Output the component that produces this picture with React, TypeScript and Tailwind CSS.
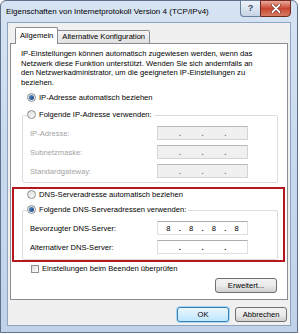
import React from 'react'

const font = { fontFamily: '"Liberation Sans", Arial, sans-serif' }

function Radio({ checked, disabled }: { checked?: boolean; disabled?: boolean }) {
  return (
    <span
      className={`w-[9px] h-[9px] rounded-full border flex items-center justify-center shrink-0 bg-gradient-to-br from-[#d9d9d9] to-[#ffffff] ${
        disabled ? 'border-[#b0b0b0]' : 'border-[#8e8f8f]'
      }`}
    >
      {checked && (
        <span className="w-[5px] h-[5px] rounded-full bg-gradient-to-br from-[#5b8fd4] to-[#153e7a]" />
      )}
    </span>
  )
}

function IpField({ values, disabled }: { values?: string[]; disabled?: boolean }) {
  const v = values ?? ['', '', '', '']
  return (
    <div
      className={`w-[91px] h-[14px] border flex items-center text-[7.6px] ${
        disabled
          ? 'bg-[#f0f0f0] border-[#d4d4d4] border-t-[#b8b8b8] text-[#6d6d6d]'
          : 'bg-white border-[#dbdfe6] border-t-[#abadb3] text-black'
      }`}
    >
      {v.map((x, i) => (
        <React.Fragment key={i}>
          <span className="flex-1 text-center">{x}</span>
          {i < 3 && <span className="font-bold">.</span>}
        </React.Fragment>
      ))}
    </div>
  )
}

function FieldRow({ label, disabled, values }: { label: string; disabled?: boolean; values?: string[] }) {
  return (
    <div className="h-[19px] flex items-center">
      <span className={`ml-[7px] w-[127px] ${disabled ? 'text-[#a3a3a3]' : 'text-black'}`}>{label}</span>
      <IpField disabled={disabled} values={values} />
    </div>
  )
}

function Button({ children, primary, className }: { children: React.ReactNode; primary?: boolean; className?: string }) {
  return (
    <div
      className={`h-[15px] rounded-[3px] border flex items-center justify-center bg-gradient-to-b ${
        primary
          ? 'border-[#3c7fb1] from-[#eaf6fd] to-[#bee6fd] shadow-[0_0_0_1px_#a6d6f5]'
          : 'border-[#707070] from-[#f2f2f2] via-[#ebebeb] to-[#cfcfcf]'
      } ${className ?? ''}`}
    >
      {children}
    </div>
  )
}

export default function App() {
  return (
    <div className="w-[300px] h-[334px] bg-white text-[7.6px] text-black leading-none" style={font}>
      <div className="w-[298px] h-[333px] rounded-t-[6px] border border-[#5f7289] bg-gradient-to-b from-[#d6e3f3] via-[#c8d9ee] to-[#bfd2ea] flex flex-col px-[6px] pb-[6px]">
        {/* Title bar */}
        <div className="h-[21px] flex justify-between shrink-0">
          <span className="mt-[7px] -ml-[1px] text-[8px] text-black">
            Eigenschaften von Internetprotokoll Version 4 (TCP/IPv4)
          </span>
          <div className="flex h-[17px] -mt-[1px]">
            <div className="w-[20px] h-full border border-[#6b7e97] border-r-0 rounded-bl-[4px] bg-gradient-to-b from-[#eef3fa] via-[#dbe5f1] to-[#c5d3e4] flex items-center justify-center text-[9px] font-bold text-[#3b4a5e]">
              ?
            </div>
            <div className="w-[31px] h-full border border-[#6e2b22] rounded-br-[4px] bg-gradient-to-b from-[#e9a99b] via-[#c9452f] to-[#d67a64] flex items-center justify-center">
              <svg width="10" height="9" viewBox="0 0 10 9">
                <path d="M1.5 1 L8.5 8 M8.5 1 L1.5 8" stroke="#5a1a12" strokeWidth="3" strokeLinecap="round" />
                <path d="M1.5 1 L8.5 8 M8.5 1 L1.5 8" stroke="#ffffff" strokeWidth="1.8" strokeLinecap="round" />
              </svg>
            </div>
          </div>
        </div>

        {/* Dialog body */}
        <div className="flex-1 bg-[#f0f0f0] border border-[#8ea4c1] flex flex-col px-[2px] pt-[5px]">
          {/* Tabs */}
          <div className="flex items-end ml-[5px] h-[16px] relative z-10 -mb-[1px]">
            <div className="h-[17px] px-[4px] bg-white border border-[#898c95] border-b-0 flex items-center rounded-t-[2px]">
              Allgemein
            </div>
            <div className="h-[14px] px-[4px] bg-gradient-to-b from-[#f4f4f4] to-[#e1e1e1] border border-[#898c95] border-l-0 flex items-center rounded-tr-[2px]">
              Alternative Konfiguration
            </div>
          </div>

          {/* Tab panel */}
          <div className="h-[257px] bg-white border border-[#898c95] flex flex-col">
            <p className="ml-[10px] mt-[5px] w-[242px] leading-[9.7px]">
              IP-Einstellungen können automatisch zugewiesen werden, wenn das Netzwerk diese Funktion unterstützt. Wenden Sie sich andernfalls an den Netzwerkadministrator, um die geeigneten IP-Einstellungen zu beziehen.
            </p>

            <div className="h-[12px] mt-[4px] ml-[16px] flex items-center gap-[3px]">
              <Radio checked />
              <span>IP-Adresse automatisch beziehen</span>
            </div>

            {/* IP group */}
            <div className="ml-[11px] mt-[11px] w-[256px] h-[68px] border border-[#dcdcdc] rounded-[2px] flex flex-col">
              <div className="-mt-[7px] h-[12px] ml-[4px] flex items-center gap-[3px] self-start bg-white pr-[2px]">
                <Radio />
                <span>Folgende IP-Adresse verwenden:</span>
              </div>
              <div className="mt-[3px]">
                <FieldRow label="IP-Adresse:" disabled />
                <FieldRow label="Subnetzmaske:" disabled />
                <FieldRow label="Standardgateway:" disabled />
              </div>
            </div>

            {/* DNS section (highlighted) */}
            <div className="ml-[1px] mt-[4px] w-[273px] h-[75px] border-2 border-[#b5171f] flex flex-col">
              <div className="h-[12px] ml-[13px] flex items-center gap-[3px]">
                <Radio />
                <span>DNS-Serveradresse automatisch beziehen</span>
              </div>
              <div className="ml-[8px] mt-[9px] w-[256px] h-[50px] border border-[#dcdcdc] rounded-[2px] flex flex-col">
                <div className="-mt-[7px] h-[12px] ml-[4px] flex items-center gap-[3px] self-start bg-white pr-[2px]">
                  <Radio checked />
                  <span>Folgende DNS-Serveradressen verwenden:</span>
                </div>
                <div className="mt-[3px]">
                  <FieldRow label="Bevorzugter DNS-Server:" values={['8', '8', '8', '8']} />
                  <FieldRow label="Alternativer DNS-Server:" />
                </div>
              </div>
            </div>

            <div className="h-[12px] mt-[1px] ml-[20px] flex items-center gap-[3px]">
              <span className="w-[8px] h-[8px] border border-[#8e8f8f] bg-gradient-to-br from-[#dcdcdc] to-white shrink-0" />
              <span>Einstellungen beim Beenden überprüfen</span>
            </div>

            <div className="flex justify-end mr-[10px] mt-[3px]">
              <Button className="w-[62px]">Erweitert...</Button>
            </div>
          </div>

          {/* Dialog buttons */}
          <div className="flex justify-end gap-[6px] mt-[7px] mr-[1px]">
            <Button primary className="w-[52px]">OK</Button>
            <Button className="w-[52px]">Abbrechen</Button>
          </div>
        </div>
      </div>
    </div>
  )
}
